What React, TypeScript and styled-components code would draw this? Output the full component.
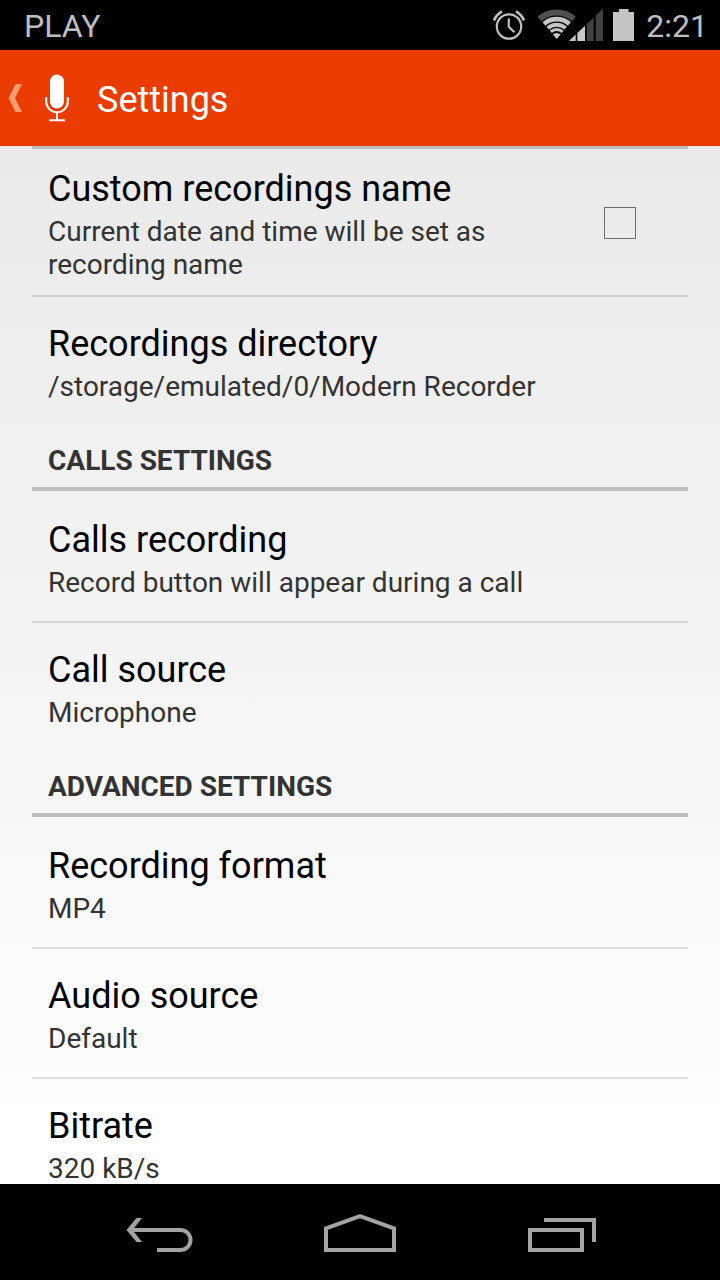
import React from "react";
import styled, { createGlobalStyle } from "styled-components";

const GlobalStyle = createGlobalStyle`
  *, *::before, *::after { box-sizing: border-box; }
  body {
    margin: 0;
    background: #000;
    font-family: Roboto, "Liberation Sans", sans-serif;
  }
  button {
    font: inherit;
    color: inherit;
    background: none;
    border: 0;
    padding: 0;
    margin: 0;
    cursor: pointer;
  }
`;

const Screen = styled.div`
  display: flex;
  flex-direction: column;
  height: 100vh;
  overflow: hidden;
`;

const StatusBar = styled.div`
  flex: none;
  display: flex;
  align-items: center;
  justify-content: space-between;
  height: 50px;
  padding: 0 12px 0 24px;
  background: #000;
  color: #bebebe;
  font-size: 32px;
  line-height: 50px;
`;

const Carrier = styled.span`
  padding-top: 2px;
`;

const Clock = styled.time`
  margin-left: 2px;
  padding-top: 2px;
`;

const StatusIcons = styled.div`
  display: flex;
  align-items: center;
  gap: 10px;
`;

const AppBar = styled.header`
  flex: none;
  display: flex;
  align-items: center;
  height: 96px;
  padding-left: 8px;
  background: #eb3c00;
  color: #fff;
`;

const UpButton = styled.button`
  display: flex;
  align-items: center;
  gap: 22px;
  height: 96px;
`;

const ScreenTitle = styled.h1`
  margin: 0 0 0 28px;
  padding-top: 4px;
  font-size: 36px;
  line-height: 42px;
  font-weight: 400;
`;

const Content = styled.main`
  flex: 1;
  min-height: 0;
  overflow: hidden;
  padding: 0 32px;
  background: linear-gradient(#eaeaea, #fff);
`;

const Section = styled.section`
  display: flex;
  flex-direction: column;
`;

const rule = "#bfbfbf";

const TopRule = styled.div`
  height: 3px;
  background: ${rule};
`;

const SectionTitle = styled.h2`
  margin: 0;
  padding: 19px 16px 10px;
  border-bottom: 4px solid ${rule};
  color: #333;
  font-size: 28px;
  line-height: 33px;
  font-weight: 700;
`;

const rowStyles = `
  display: flex;
  align-items: center;
  justify-content: space-between;
  width: 100%;
  min-height: 130px;
  padding: 17px 16px 14px;
  border-top: 2px solid rgba(0, 0, 0, 0.12);
  text-align: left;
  cursor: pointer;
  &:first-of-type { border-top-color: transparent; }
`;

const Row = styled.button`
  ${rowStyles}
`;

const CheckRow = styled.label`
  ${rowStyles}
  padding-right: 52px;
`;

const RowText = styled.span`
  display: flex;
  flex-direction: column;
  gap: 5px;
`;

const RowTitle = styled.span`
  color: #000;
  font-size: 36px;
  line-height: 42px;
`;

const RowSummary = styled.span`
  color: #333;
  font-size: 28px;
  line-height: 33px;
`;

const CheckBox = styled.input`
  appearance: none;
  flex: none;
  width: 32px;
  height: 32px;
  margin: 0 0 3px;
  border: 1px solid #6b6b6b;
  &:checked { background: #eb3c00; }
`;

const NavBar = styled.nav`
  flex: none;
  display: flex;
  justify-content: center;
  height: 96px;
  background: #000;
`;

const NavButton = styled.button`
  display: flex;
  align-items: center;
  justify-content: center;
  flex: 0 1 202px;
`;

const AlarmIcon = () => (
  <svg width="34" height="34" viewBox="1 0 34 34" fill="none" stroke="#bebebe" strokeWidth="2.2">
    <circle cx="17" cy="18.5" r="12.2" />
    <path d="M16.8 10.5v8.4l5.7 5.4" />
    <path d="M2 12.4Q4.4 6.6 10 3.4M32 12.4Q29.6 6.6 24 3.4" strokeWidth="2.8" />
  </svg>
);

const NetworkIcon = () => (
  <svg width="66" height="34" viewBox="0 0 66 34">
    <g fill="none" stroke="#c4c4c4">
      <path d="M2.6 10.9A26 26 0 0 1 36.8 10.9" stroke="#505050" strokeWidth="6" />
      <path d="M7 15.9A19.4 19.4 0 0 1 32.4 15.9" strokeWidth="4.6" />
      <path d="M10.7 20.1A13.8 13.8 0 0 1 28.7 20.1" strokeWidth="3.8" />
      <path d="M13.8 23.7A9 9 0 0 1 25.6 23.7" strokeWidth="3.2" />
    </g>
    <path d="M19.7 31L15.8 26.5A5.8 5.8 0 0 1 23.6 26.5Z" fill="#c4c4c4" />
    <path d="M32 33L38.7 26.6V33ZM40.3 25V33H48V17.8Z" fill="#c8c8c8" />
    <path d="M49.7 16V33H56.7V9.4ZM58.7 7.4V33H66V0.6Z" fill="#404040" />
  </svg>
);

const BatteryIcon = () => (
  <svg width="21" height="32" viewBox="0 0 21 32">
    <path d="M6 0H15.5V3H21V32H0V3H6Z" fill="#c4c4c4" />
  </svg>
);

const UpChevron = () => (
  <svg width="15" height="28" viewBox="0 0 15 28">
    <path d="M7.5 0H14L7 14L14 28H7.5L0.5 14Z" fill="#ff9b73" />
  </svg>
);

const MicIcon = () => (
  <svg width="24" height="48" viewBox="0 0 24 48">
    <rect x="5" y="0.5" width="14" height="34" rx="7" fill="#fff" />
    <path
      d="M1.2 23V27.5A10.8 10.8 0 0 0 22.8 27.5V23M12 38V46M4 46.2H20"
      fill="none"
      stroke="#fff"
      strokeWidth="2"
    />
  </svg>
);

const navStroke = { fill: "none", stroke: "#a3a3a3", strokeWidth: 4 };

const BackIcon = () => (
  <svg width="72" height="40" viewBox="-4 0 72 40">
    <path d="M7 18H54.5A10 10 0 0 1 54.5 38H31" {...navStroke} />
    <path d="M10.5 6H16L6.5 18L16 30H10.5L0.5 18Z" fill="#a3a3a3" />
  </svg>
);

const HomeIcon = () => (
  <svg width="72" height="40" viewBox="0 0 72 40">
    <path d="M2 38V16.4L36 4.2L70 16.4V38Z" {...navStroke} />
  </svg>
);

const RecentsIcon = () => (
  <svg width="68" height="40" viewBox="0 0 68 40">
    <path d="M2 18H54V38H2ZM16 8H66V30" {...navStroke} />
  </svg>
);

type Preference = { title: string; summary: string };

const callPreferences: Preference[] = [
  { title: "Calls recording", summary: "Record button will appear during a call" },
  { title: "Call source", summary: "Microphone" },
];

const advancedPreferences: Preference[] = [
  { title: "Recording format", summary: "MP4" },
  { title: "Audio source", summary: "Default" },
  { title: "Bitrate", summary: "320 kB/s" },
];

const DirectoryRow = styled(Row)`
  &:first-of-type { border-top-color: rgba(0, 0, 0, 0.12); }
`;

const PreferenceText = ({ title, summary }: Preference) => (
  <RowText>
    <RowTitle>{title}</RowTitle>
    <RowSummary>{summary}</RowSummary>
  </RowText>
);

const PreferenceSection = ({ heading, items }: { heading: string; items: Preference[] }) => (
  <Section>
    <SectionTitle>{heading}</SectionTitle>
    {items.map((item) => (
      <Row key={item.title} type="button">
        <PreferenceText {...item} />
      </Row>
    ))}
  </Section>
);

export default function App() {
  return (
    <>
      <GlobalStyle />
      <Screen>
        <StatusBar>
          <Carrier>PLAY</Carrier>
          <StatusIcons>
            <AlarmIcon />
            <NetworkIcon />
            <BatteryIcon />
            <Clock>2:21</Clock>
          </StatusIcons>
        </StatusBar>
        <AppBar>
          <UpButton type="button" aria-label="Navigate up">
            <UpChevron />
            <MicIcon />
          </UpButton>
          <ScreenTitle>Settings</ScreenTitle>
        </AppBar>
        <Content>
          <Section>
            <TopRule />
            <CheckRow htmlFor="custom-name">
              <PreferenceText
                title="Custom recordings name"
                summary="Current date and time will be set as recording name"
              />
              <CheckBox id="custom-name" type="checkbox" />
            </CheckRow>
            <DirectoryRow type="button">
              <PreferenceText
                title="Recordings directory"
                summary="/storage/emulated/0/Modern Recorder"
              />
            </DirectoryRow>
          </Section>
          <PreferenceSection heading="CALLS SETTINGS" items={callPreferences} />
          <PreferenceSection heading="ADVANCED SETTINGS" items={advancedPreferences} />
        </Content>
        <NavBar>
          <NavButton type="button" aria-label="Back">
            <BackIcon />
          </NavButton>
          <NavButton type="button" aria-label="Home">
            <HomeIcon />
          </NavButton>
          <NavButton type="button" aria-label="Recent apps">
            <RecentsIcon />
          </NavButton>
        </NavBar>
      </Screen>
    </>
  );
}
